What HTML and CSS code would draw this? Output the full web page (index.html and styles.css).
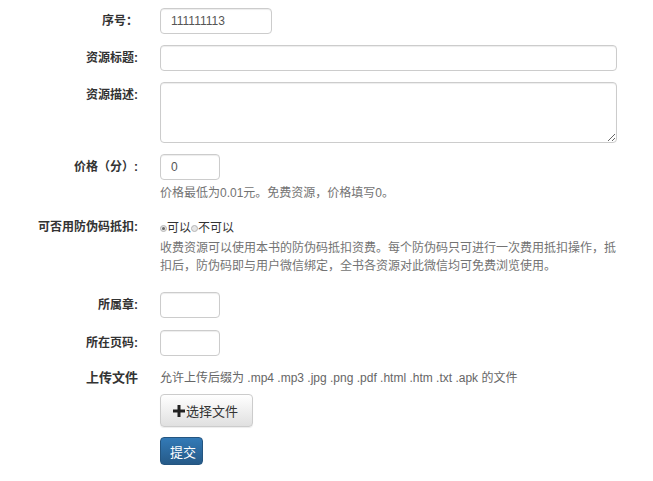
FILE: index.html
```html
<!DOCTYPE html>
<html lang="zh">
<head>
<meta charset="utf-8">
<link rel="stylesheet" href="styles.css">
</head>
<body>
<form class="form">
  <div class="row">
    <label class="label">序号：</label>
    <div class="field"><input class="input w-short" type="text" value="111111113"></div>
  </div>
  <div class="row">
    <label class="label">资源标题:</label>
    <div class="field"><input class="input w-full" type="text"></div>
  </div>
  <div class="row">
    <label class="label">资源描述:</label>
    <div class="field"><textarea class="input textarea"></textarea></div>
  </div>
  <div class="row">
    <label class="label">价格（分）:</label>
    <div class="field">
      <input class="input w-tiny" type="text" value="0">
      <p class="help">价格最低为0.01元。免费资源，价格填写0。</p>
    </div>
  </div>
  <div class="row row-radio">
    <label class="label">可否用防伪码抵扣:</label>
    <div class="field">
      <div class="radios"><span class="radio checked"></span>可以<span class="radio"></span>不可以</div>
      <p class="help help-long">收费资源可以使用本书的防伪码抵扣资费。每个防伪码只可进行一次费用抵扣操作，抵扣后，防伪码即与用户微信绑定，全书各资源对此微信均可免费浏览使用。</p>
    </div>
  </div>
  <div class="row row-chapter">
    <label class="label">所属章:</label>
    <div class="field"><input class="input w-tiny" type="text"></div>
  </div>
  <div class="row">
    <label class="label">所在页码:</label>
    <div class="field"><input class="input w-tiny" type="text"></div>
  </div>
  <div class="row row-upload">
    <label class="label label-upload">上传文件</label>
    <div class="field">
      <p class="upload-note">允许上传后缀为 .mp4 .mp3 .jpg .png .pdf .html .htm .txt .apk 的文件</p>
      <button type="button" class="btn btn-default"><svg class="plus" viewBox="0 0 12 12" width="12" height="12"><path d="M4.5 0h3v4.5H12v3H7.5V12h-3V7.5H0v-3h4.5z" fill="#222"/></svg>选择文件</button>
      <div><button type="button" class="btn btn-primary">提交</button></div>
    </div>
  </div>
</form>
</body>
</html>
```
FILE: styles.css
```css
* { box-sizing: border-box; }
html, body { margin: 0; padding: 0; background: #fff; }
body {
  font-family: "Liberation Sans", "Noto Sans CJK SC", Arial, sans-serif;
  font-size: 12px;
  color: #333;
  line-height: 17px;
}
.form { padding-top: 8px; }
.row {
  display: grid;
  grid-template-columns: 160px 457px;
  margin-bottom: 11px;
}
.label {
  font-weight: bold;
  text-align: right;
  padding-right: 22px;
  padding-top: 5px;
  white-space: nowrap;
}
.field { min-width: 0; }
.input {
  display: block;
  height: 26px;
  padding: 3px 10px;
  font-family: inherit;
  font-size: 12px;
  color: #555;
  border: 1px solid #ccc;
  border-radius: 4px;
  background: #fff;
  box-shadow: inset 0 1px 1px rgba(0,0,0,.075);
  margin: 0;
}
.w-short { width: 112px; }
.w-full { width: 457px; }
.w-tiny { width: 60px; }
.textarea { width: 457px; height: 61px; resize: vertical; }
.help {
  margin: 4px 0 0;
  color: #737373;
  line-height: 18px;
}
.row-radio { margin-top: 14px; margin-bottom: 17px; }
.row-radio .label { padding-top: 3px; }
.radios { display: flex; align-items: center; height: 18px; color: #333; margin-top: 3px; }
.radio {
  display: inline-block;
  width: 7px; height: 7px;
  border: 1px solid #b5b5b5;
  border-radius: 50%;
  background: #e6e6e6;
  position: relative;
}
.radio.checked::after {
  content: "";
  position: absolute;
  left: 1px; top: 1px;
  width: 3px; height: 3px;
  border-radius: 50%;
  background: #666;
}
.help-long { margin-top: 2px; }
.row-chapter { margin-bottom: 12px; }
.row-upload { margin-top: 11px; }
.label-upload { padding-top: 2px; font-size: 13px; }
.upload-note { margin: 2px 0 0; color: #666; line-height: 18px; }
.btn {
  display: inline-flex;
  align-items: center;
  font-family: inherit;
  font-size: 13px;
  border-radius: 4px;
  cursor: pointer;
  margin: 0;
}
.btn-default {
  margin-top: 7px;
  width: 93px;
  height: 33px;
  padding: 0 0 0 12px;
  color: #333;
  border: 1px solid #ccc;
  background: linear-gradient(to bottom, #fff 0%, #e0e0e0 100%);
  box-shadow: inset 0 1px 0 rgba(255,255,255,.15), 0 1px 1px rgba(0,0,0,.075);
}
.plus { margin-right: 1px; }
.btn-primary {
  margin-top: 10px;
  width: 43px;
  height: 28px;
  padding: 0 0 0 9px;
  color: #fff;
  border: 1px solid #245580;
  background: linear-gradient(to bottom, #337ab7 0%, #265a88 100%);
}
```
